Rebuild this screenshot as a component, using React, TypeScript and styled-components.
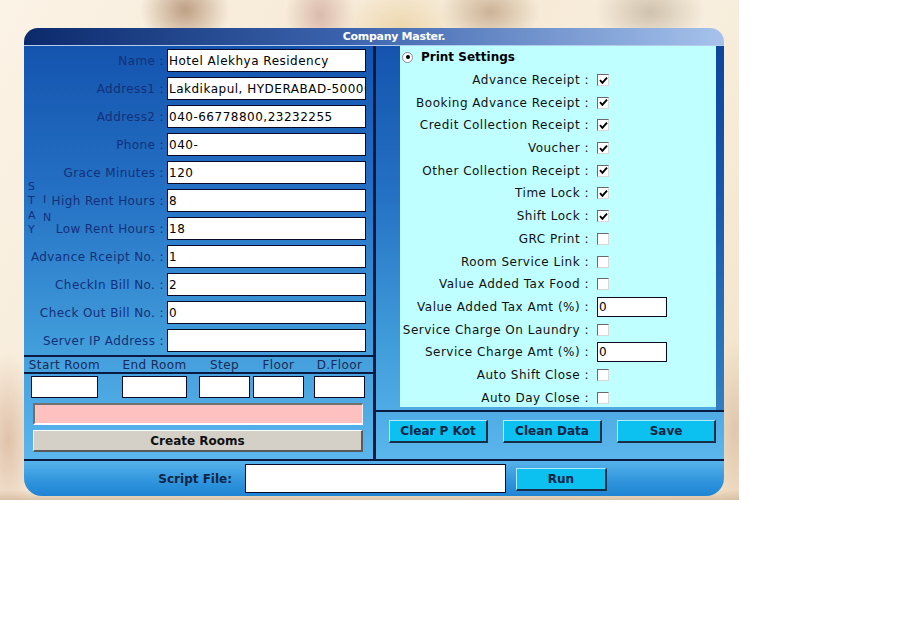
import React from 'react';
import styled, { createGlobalStyle } from 'styled-components';

const Global = createGlobalStyle`
  html, body { margin: 0; padding: 0; background: #ffffff; }
  body { font-family: "DejaVu Sans", Verdana, sans-serif; font-size: 12px; letter-spacing: 0.4px; }
  * { box-sizing: border-box; }
  input { font-family: "DejaVu Sans", Verdana, sans-serif; font-size: 12px; letter-spacing: 0.5px; }
`;

const Backdrop = styled.div`
  width: 739px;
  height: 500px;
  padding: 28px 0 0 24px;
  background:
    radial-gradient(ellipse 45px 40px at 185px 10px, rgba(176, 140, 110, 0.8), rgba(176, 140, 110, 0) 100%),
    radial-gradient(ellipse 35px 45px at 320px 15px, rgba(210, 170, 160, 0.75), rgba(210, 170, 160, 0) 100%),
    radial-gradient(ellipse 55px 40px at 400px 30px, rgba(236, 214, 170, 0.95), rgba(236, 214, 170, 0) 100%),
    radial-gradient(ellipse 50px 35px at 490px 12px, rgba(190, 160, 130, 0.75), rgba(190, 160, 130, 0) 100%),
    radial-gradient(ellipse 55px 35px at 650px 12px, rgba(180, 165, 145, 0.6), rgba(180, 165, 145, 0) 100%),
    radial-gradient(ellipse 30px 90px at 8px 440px, rgba(214, 176, 150, 0.7), rgba(214, 176, 150, 0) 100%),
    radial-gradient(ellipse 25px 90px at 735px 430px, rgba(214, 186, 160, 0.7), rgba(214, 186, 160, 0) 100%),
    linear-gradient(180deg, rgba(0,0,0,0) 490px, rgba(200, 170, 140, 0.6) 500px),
    linear-gradient(120deg, #fbf3e6 0%, #f6e9d4 40%, #f8eedd 70%, #f3e2c8 100%);
`;

const Window = styled.div`
  width: 700px;
  height: 468px;
  display: flex;
  flex-direction: column;
  border-radius: 14px 14px 18px 18px;
  overflow: hidden;
`;

const TitleBar = styled.div`
  height: 18px;
  border-bottom: 1px solid #b4cdef;
  background: linear-gradient(90deg, #0b2a6c 0%, #3a62ac 45%, #a6c2ec 100%);
  color: #ffffff;
  font-weight: bold;
  font-size: 11px;
  letter-spacing: -0.3px;
  display: flex;
  align-items: center;
  justify-content: center;
  padding-left: 40px;
`;

const Body = styled.div`
  height: 413px;
  display: grid;
  grid-template-columns: 349px 3px 348px;
`;

const panelBg = `linear-gradient(180deg, #1454ae 0%, #2470c4 35%, #3f9ad9 70%, #5ab6ec 100%)`;

const LeftPanel = styled.div`
  background: ${panelBg};
  display: flex;
  flex-direction: column;
`;

const Divider = styled.div`
  background: #0a1a40;
`;

const Form = styled.div`
  display: flex;
  flex-direction: column;
  gap: 5px;
  padding: 3px 7px 0 3px;
`;

const FormRow = styled.div`
  display: grid;
  grid-template-columns: minmax(0, 1fr) 199px;
  column-gap: 3px;
  align-items: center;
  height: 23px;
`;

const Label = styled.span`
  display: flex;
  justify-content: flex-end;
  min-width: 0;
  white-space: nowrap;
  color: #14307a;
`;

const TextBox = styled.input<{ $w?: number; $h?: number }>`
  width: ${p => (p.$w ? `${p.$w}px` : '100%')};
  height: ${p => p.$h ?? 23}px;
  border: 1px solid #0a0a28;
  background: #ffffff;
  color: #000000;
  padding: 0 0 0 1px;
  margin: 0;
  outline: none;
  display: block;
`;

const StayGroup = styled.div`
  display: flex;
  align-items: center;
  height: 51px;
`;

const VWord = styled.div<{ $w: number; $lh: number }>`
  width: ${p => p.$w}px;
  flex-shrink: 0;
  display: flex;
  flex-direction: column;
  font-size: 11px;
  letter-spacing: 0;
  line-height: ${p => p.$lh}px;
  color: #14307a;
  margin-bottom: 12px;
  padding-left: 1px;
`;

const StayRows = styled.div`
  flex: 1;
  min-width: 0;
  display: flex;
  flex-direction: column;
  gap: 5px;
`;

const Rule = styled.div<{ $mt?: number }>`
  height: 2px;
  background: #0a1a40;
  margin-top: ${p => p.$mt ?? 0}px;
  flex-shrink: 0;
`;

const RoomRow = styled.div<{ $h: number; $mt?: number }>`
  display: flex;
  height: ${p => p.$h}px;
  margin-top: ${p => p.$mt ?? 0}px;
  align-items: center;
  flex-shrink: 0;
`;

const RoomCell = styled.div<{ $w: number; $ml: number }>`
  width: ${p => p.$w}px;
  margin-left: ${p => p.$ml}px;
  display: flex;
  justify-content: center;
  white-space: nowrap;
  color: #1b2a55;
`;

const PinkBar = styled.div`
  height: 22px;
  flex-shrink: 0;
  margin: 5px 10px 0 9px;
  background: #ffc0c0;
  border-top: 2px solid #707070;
  border-left: 2px solid #707070;
  border-right: 1px solid #f0f0f0;
  border-bottom: 2px solid #ffffff;
`;

const GrayButton = styled.button`
  height: 22px;
  flex-shrink: 0;
  margin: 5px 10px 0 9px;
  background: #d4d0c8;
  border-top: 1px solid #ffffff;
  border-left: 1px solid #ffffff;
  border-right: 2px solid #5a5a5a;
  border-bottom: 2px solid #5a5a5a;
  font-family: "DejaVu Sans", Verdana, sans-serif;
  font-weight: bold;
  font-size: 12px;
  color: #101010;
  padding: 0;
`;

const RightPanel = styled.div`
  background: ${panelBg};
  display: flex;
  flex-direction: column;
`;

const TopArea = styled.div`
  height: 364px;
  display: flex;
  padding: 0 8px 3px 24px;
  background: linear-gradient(90deg, rgba(0,0,0,0) 340px, rgba(0, 40, 130, 0.35) 340px);
`;

const Settings = styled.div`
  flex: 1;
  background: #c0ffff;
  display: grid;
  grid-template-columns: 197px 1fr;
  grid-auto-rows: 22.7px;
  align-items: center;
  align-content: start;
`;

const HeaderRow = styled.div`
  grid-column: 1 / -1;
  display: flex;
  align-items: center;
  gap: 8px;
  padding-left: 2px;
  font-weight: bold;
  letter-spacing: 0;
  color: #000000;
`;

const Radio = styled.span`
  width: 11px;
  height: 11px;
  border-radius: 50%;
  border: 1px solid #8a8a8a;
  background: #ffffff;
  display: flex;
  align-items: center;
  justify-content: center;
  &::after {
    content: '';
    width: 4px;
    height: 4px;
    border-radius: 50%;
    background: #000000;
  }
`;

const SetLabel = styled.span`
  display: flex;
  justify-content: flex-end;
  min-width: 0;
  white-space: nowrap;
  padding-right: 8px;
  letter-spacing: 0.5px;
  color: #111111;
`;

const CheckBox = styled.span`
  width: 12px;
  height: 12px;
  background: #ffffff;
  border-top: 1px solid #6a6a6a;
  border-left: 1px solid #6a6a6a;
  border-right: 1px solid #d8d8d8;
  border-bottom: 1px solid #d8d8d8;
  display: flex;
  align-items: center;
  justify-content: center;
`;

const ButtonBar = styled.div`
  flex: 1;
  display: flex;
  gap: 15px;
  padding: 8px 0 0 13px;
  align-items: flex-start;
`;

const BlueButton = styled.button<{ $w: number }>`
  width: ${p => p.$w}px;
  height: 23px;
  background: #0cc0f0;
  border-top: 1px solid #b0ecff;
  border-left: 1px solid #b0ecff;
  border-right: 2px solid #1a2e48;
  border-bottom: 2px solid #1a2e48;
  font-family: "DejaVu Sans", Verdana, sans-serif;
  font-weight: bold;
  font-size: 12px;
  color: #0b2546;
  padding: 0;
`;

const BottomBar = styled.div`
  height: 35px;
  display: flex;
  align-items: center;
  background: linear-gradient(180deg, #56b2ea 0%, #2f94dc 60%, #1f84d4 100%);
`;

const ScriptLabel = styled.span`
  width: 208px;
  text-align: right;
  font-weight: bold;
  letter-spacing: 0;
  color: #0b2546;
  margin-right: 13px;
`;

const RunSlot = styled.div`
  margin-left: 10px;
  margin-top: 2px;
`;

const Check = ({ on }: { on: boolean }) => (
  <CheckBox>
    {on && (
      <svg width="9" height="9" viewBox="0 0 9 9">
        <path d="M1 4.2 L3.4 6.8 L8 1.6" stroke="#000" strokeWidth="1.9" fill="none" />
      </svg>
    )}
  </CheckBox>
);

const formTop = [
  ['Name :', 'Hotel Alekhya Residency'],
  ['Address1 :', 'Lakdikapul, HYDERABAD-500004'],
  ['Address2 :', '040-66778800,23232255'],
  ['Phone :', '040-'],
  ['Grace Minutes :', '120'],
];
const stayRows = [
  ['High Rent Hours :', '8'],
  ['Low Rent Hours :', '18'],
];
const formBottom = [
  ['Advance Rceipt No. :', '1'],
  ['CheckIn Bill No. :', '2'],
  ['Check Out Bill No. :', '0'],
  ['Server IP Address :', ''],
];

const roomCols = [
  { label: 'Start Room', w: 67, ml: 7 },
  { label: 'End Room', w: 65, ml: 24 },
  { label: 'Step', w: 51, ml: 12 },
  { label: 'Floor', w: 51, ml: 3 },
  { label: 'D.Floor', w: 51, ml: 10 },
];

type Setting = { label: string; kind: 'check' | 'text'; on?: boolean; value?: string };
const settings: Setting[] = [
  { label: 'Advance Receipt :', kind: 'check', on: true },
  { label: 'Booking Advance Receipt :', kind: 'check', on: true },
  { label: 'Credit Collection Receipt :', kind: 'check', on: true },
  { label: 'Voucher :', kind: 'check', on: true },
  { label: 'Other Collection Receipt :', kind: 'check', on: true },
  { label: 'Time Lock :', kind: 'check', on: true },
  { label: 'Shift Lock :', kind: 'check', on: true },
  { label: 'GRC Print :', kind: 'check', on: false },
  { label: 'Room Service Link :', kind: 'check', on: false },
  { label: 'Value Added Tax Food :', kind: 'check', on: false },
  { label: 'Value Added Tax Amt (%) :', kind: 'text', value: '0' },
  { label: 'Service Charge On Laundry :', kind: 'check', on: false },
  { label: 'Service Charge Amt (%) :', kind: 'text', value: '0' },
  { label: 'Auto Shift Close :', kind: 'check', on: false },
  { label: 'Auto Day Close :', kind: 'check', on: false },
];

const Field = ({ label, value }: { label: string; value: string }) => (
  <FormRow>
    <Label>{label}</Label>
    <TextBox readOnly defaultValue={value} />
  </FormRow>
);

export default function App() {
  return (
    <>
      <Global />
      <Backdrop>
        <Window>
          <TitleBar>Company Master.</TitleBar>
          <Body>
            <LeftPanel>
              <Form>
                {formTop.map(([l, v]) => (
                  <Field key={l} label={l} value={v} />
                ))}
                <StayGroup>
                  <VWord $w={15} $lh={14.3}>
                    <span>S</span>
                    <span>T</span>
                    <span>A</span>
                    <span>Y</span>
                  </VWord>
                  <VWord $w={10} $lh={18}>
                    <span>I</span>
                    <span>N</span>
                  </VWord>
                  <StayRows>
                    {stayRows.map(([l, v]) => (
                      <Field key={l} label={l} value={v} />
                    ))}
                  </StayRows>
                </StayGroup>
                {formBottom.map(([l, v]) => (
                  <Field key={l} label={l} value={v} />
                ))}
              </Form>
              <Rule $mt={3} />
              <RoomRow $h={15}>
                {roomCols.map(c => (
                  <RoomCell key={c.label} $w={c.w} $ml={c.ml}>
                    {c.label}
                  </RoomCell>
                ))}
              </RoomRow>
              <Rule />
              <RoomRow $h={22} $mt={2}>
                {roomCols.map(c => (
                  <RoomCell key={c.label} $w={c.w} $ml={c.ml}>
                    <TextBox readOnly defaultValue="" $w={c.w} $h={22} />
                  </RoomCell>
                ))}
              </RoomRow>
              <PinkBar />
              <GrayButton>Create Rooms</GrayButton>
            </LeftPanel>
            <Divider />
            <RightPanel>
              <TopArea>
                <Settings>
                  <HeaderRow>
                    <Radio />
                    Print Settings
                  </HeaderRow>
                  {settings.map(s => (
                    <React.Fragment key={s.label}>
                      <SetLabel>{s.label}</SetLabel>
                      {s.kind === 'check' ? (
                        <Check on={!!s.on} />
                      ) : (
                        <TextBox readOnly defaultValue={s.value} $w={70} $h={20} />
                      )}
                    </React.Fragment>
                  ))}
                </Settings>
              </TopArea>
              <Rule />
              <ButtonBar>
                <BlueButton $w={99}>Clear P Kot</BlueButton>
                <BlueButton $w={99}>Clean Data</BlueButton>
                <BlueButton $w={99}>Save</BlueButton>
              </ButtonBar>
            </RightPanel>
          </Body>
          <Rule />
          <BottomBar>
            <ScriptLabel>Script File:</ScriptLabel>
            <TextBox readOnly defaultValue="" $w={261} $h={29} />
            <RunSlot>
              <BlueButton $w={91}>Run</BlueButton>
            </RunSlot>
          </BottomBar>
        </Window>
      </Backdrop>
    </>
  );
}
